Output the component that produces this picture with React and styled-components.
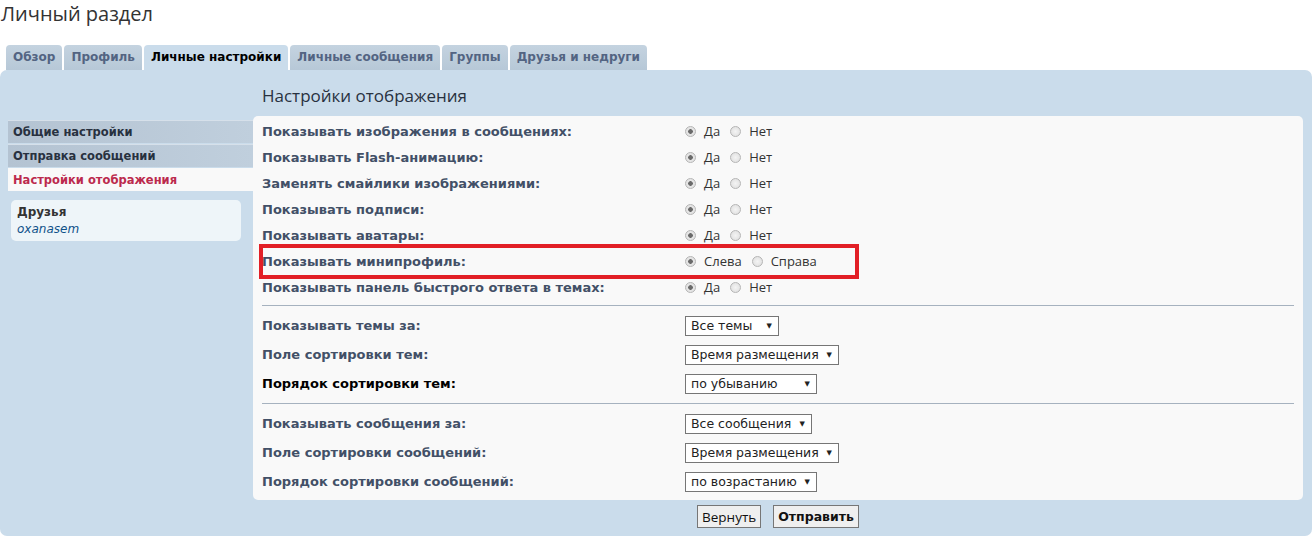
import styled, { createGlobalStyle } from 'styled-components'

const GlobalStyle = createGlobalStyle`
  html, body {
    margin: 0;
    padding: 0;
    background: #fff;
  }
  body {
    font-family: "DejaVu Sans", Verdana, sans-serif;
    color: #333;
  }
`

const tabs = [
  { label: 'Обзор' },
  { label: 'Профиль' },
  { label: 'Личные настройки', active: true },
  { label: 'Личные сообщения' },
  { label: 'Группы' },
  { label: 'Друзья и недруги' },
]

const menu = [
  { label: 'Общие настройки' },
  { label: 'Отправка сообщений' },
  { label: 'Настройки отображения', active: true },
]

const radioRows = [
  { label: 'Показывать изображения в сообщениях:', options: ['Да', 'Нет'] },
  { label: 'Показывать Flash-анимацию:', options: ['Да', 'Нет'] },
  { label: 'Заменять смайлики изображениями:', options: ['Да', 'Нет'] },
  { label: 'Показывать подписи:', options: ['Да', 'Нет'] },
  { label: 'Показывать аватары:', options: ['Да', 'Нет'] },
  { label: 'Показывать минипрофиль:', options: ['Слева', 'Справа'], marked: true },
  { label: 'Показывать панель быстрого ответа в темах:', options: ['Да', 'Нет'] },
]

const topicRows = [
  { label: 'Показывать темы за:', value: 'Все темы', width: 94 },
  { label: 'Поле сортировки тем:', value: 'Время размещения', width: 154 },
  { label: 'Порядок сортировки тем:', value: 'по убыванию', width: 132, hover: true },
]

const postRows = [
  { label: 'Показывать сообщения за:', value: 'Все сообщения', width: 127 },
  { label: 'Поле сортировки сообщений:', value: 'Время размещения', width: 154 },
  { label: 'Порядок сортировки сообщений:', value: 'по возрастанию', width: 132 },
]

export default function App() {
  return (
    <>
      <GlobalStyle />
      <Title>Личный раздел</Title>
      <TabBar>
        {tabs.map((t) => (
          <Tab key={t.label} $active={t.active}>{t.label}</Tab>
        ))}
      </TabBar>
      <Panel>
        <Sidebar>
          <Menu>
            {menu.map((m) => (
              <MenuItem key={m.label} $active={m.active}>{m.label}</MenuItem>
            ))}
          </Menu>
          <FriendsBox>
            <FriendsTitle>Друзья</FriendsTitle>
            <FriendName>oxanasem</FriendName>
          </FriendsBox>
        </Sidebar>
        <Main>
          <Heading>Настройки отображения</Heading>
          <Inner>
            {radioRows.map((r) => (
              <RadioRow key={r.label}>
                <Label>{r.label}</Label>
                <Options>
                  {r.options.map((o, i) => (
                    <Option key={o}>
                      <Radio $checked={i === 0} />
                      <span>{o}</span>
                    </Option>
                  ))}
                </Options>
                {r.marked && <Marker />}
              </RadioRow>
            ))}
            <Divider />
            {topicRows.map((r) => (
              <SelectRow key={r.label}>
                <Label $hover={r.hover}>{r.label}</Label>
                <Select $width={r.width}>
                  <span>{r.value}</span>
                  <Arrow>▼</Arrow>
                </Select>
              </SelectRow>
            ))}
            <Divider />
            {postRows.map((r) => (
              <SelectRow key={r.label}>
                <Label>{r.label}</Label>
                <Select $width={r.width}>
                  <span>{r.value}</span>
                  <Arrow>▼</Arrow>
                </Select>
              </SelectRow>
            ))}
          </Inner>
          <Buttons>
            <Button>Вернуть</Button>
            <Button $primary>Отправить</Button>
          </Buttons>
        </Main>
      </Panel>
    </>
  )
}

const Title = styled.h1`
  margin: 0;
  padding: 0 0 0 1px;
  height: 45px;
  line-height: 28px;
  font-family: "Open Sans", sans-serif;
  font-weight: 400;
  font-size: 20px;
  color: #333;
`

const TabBar = styled.div`
  display: flex;
  gap: 2px;
  padding-left: 6px;
  height: 25px;
  align-items: flex-end;
`

const Tab = styled.div`
  line-height: 24px;
  padding: 0 7px;
  font-size: 12px;
  font-weight: bold;
  border-radius: 4px 4px 0 0;
  color: ${(p) => (p.$active ? '#000' : '#536482')};
  background: ${(p) =>
    p.$active ? '#cadceb' : 'linear-gradient(to bottom, #c4d3e0 0%, #b7c8d7 100%)'};
  height: 25px;
`

const Panel = styled.div`
  display: flex;
  background: #cadceb;
  border-radius: 7px;
  height: 466px;
  box-sizing: border-box;
`

const Sidebar = styled.div`
  width: 245px;
  margin-left: 8px;
  padding-top: 50px;
  flex-shrink: 0;
`

const Menu = styled.div`
  display: flex;
  flex-direction: column;
  gap: 1px;
`

const MenuItem = styled.div`
  height: 22px;
  line-height: 22px;
  padding-left: 5px;
  font-size: 11.5px;
  font-weight: bold;
  color: ${(p) => (p.$active ? '#bc2a4d' : '#28313f')};
  background: ${(p) =>
    p.$active ? '#f9f9f9' : 'linear-gradient(to right, #b4c3d2 0%, #c0cfdd 100%)'};
  border-top: 1px solid ${(p) => (p.$active ? '#f9f9f9' : '#d6e0ea')};
`

const FriendsBox = styled.div`
  margin: 9px 12px 0 3px;
  background: #eef5f9;
  border-radius: 5px;
  padding: 5px 6px 3px;
`

const FriendsTitle = styled.div`
  font-size: 12px;
  font-weight: bold;
  color: #333;
  line-height: 15px;
`

const FriendName = styled.div`
  font-size: 12px;
  font-style: italic;
  color: #105289;
  line-height: 18px;
`

const Main = styled.div`
  flex: 1;
  margin-right: 9px;
  display: flex;
  flex-direction: column;
`

const Heading = styled.h2`
  margin: 0;
  height: 46px;
  padding: 15px 0 0 9px;
  box-sizing: border-box;
  font-family: "Open Sans", sans-serif;
  font-weight: 400;
  font-size: 17px;
  line-height: 22px;
  color: #28313f;
`

const Inner = styled.div`
  background: #f9f9f9;
  border-radius: 5px;
  padding: 2px 9px 5px;
  height: 384px;
  box-sizing: border-box;
`

const RadioRow = styled.div`
  position: relative;
  display: grid;
  grid-template-columns: 423px 1fr;
  align-items: center;
  height: 26px;
`

const SelectRow = styled.div`
  display: grid;
  grid-template-columns: 423px 1fr;
  align-items: center;
  height: 29px;
`

const Label = styled.div`
  font-size: 13px;
  font-weight: bold;
  color: ${(p) => (p.$hover ? '#000' : '#425067')};
`

const Options = styled.div`
  display: flex;
  align-items: center;
  gap: 10px;
`

const Option = styled.label`
  display: flex;
  align-items: center;
  gap: 8px;
  font-family: "Open Sans", sans-serif;
  font-size: 13px;
  color: #333;
`

const Radio = styled.span`
  width: 9px;
  height: 9px;
  border-radius: 50%;
  border: 1px solid #b5b5b5;
  background: ${(p) =>
    p.$checked
      ? 'radial-gradient(circle, #6a6a6a 0 2px, #e4e4e4 2.6px)'
      : 'radial-gradient(circle, #f4f4f4 0, #dcdcdc 100%)'};
`

const Marker = styled.div`
  position: absolute;
  left: -3px;
  top: -4px;
  width: 600px;
  height: 35px;
  border: 4px solid #e21f26;
  box-sizing: border-box;
  pointer-events: none;
`

const Divider = styled.hr`
  margin: 5px 0;
  border: 0;
  border-top: 1px solid #a6b2bf;
  height: 0;
`

const Select = styled.div`
  width: ${(p) => p.$width}px;
  height: 20px;
  box-sizing: border-box;
  border: 1px solid #767676;
  background: #fff;
  display: flex;
  align-items: center;
  justify-content: space-between;
  padding: 0 6px 0 5px;
  font-size: 12.5px;
  color: #222;
`

const Arrow = styled.span`
  font-size: 7px;
  color: #222;
`

const Buttons = styled.div`
  display: flex;
  justify-content: center;
  gap: 12px;
  padding-top: 5px;
`

const Button = styled.button`
  height: 23px;
  padding: 0 4px;
  border: 1px solid #767676;
  background: #efefef;
  font-family: ${(p) => (p.$primary ? '"DejaVu Sans", sans-serif' : '"Open Sans", sans-serif')};
  font-weight: ${(p) => (p.$primary ? 'bold' : 'normal')};
  font-size: ${(p) => (p.$primary ? '12.5px' : '13.5px')};
  color: #111;
`
